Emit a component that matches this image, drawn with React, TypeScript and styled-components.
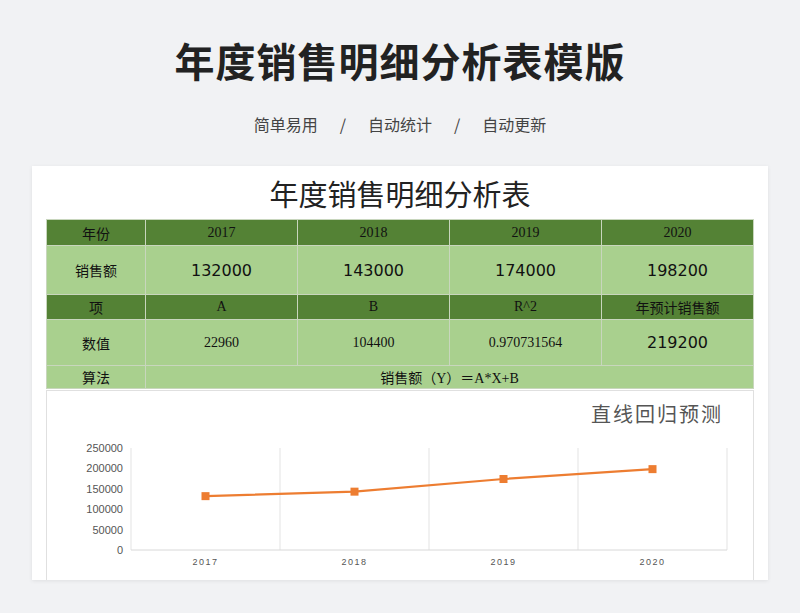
import React from "react";
import styled, { createGlobalStyle } from "styled-components";

const G = createGlobalStyle`
  body { margin:0; background:#f1f2f4; font-family:"Noto Sans CJK SC","Noto Sans",sans-serif; }
`;
const Page = styled.div`width:800px;height:613px;display:flex;flex-direction:column;align-items:center;overflow:hidden;`;
const Title = styled.h1`margin:34px 0 0;height:52px;font-size:40px;font-weight:700;color:#222;letter-spacing:1px;line-height:52px;`;
const Sub = styled.div`margin-top:26px;font-size:16px;color:#444;display:flex;gap:22px;line-height:24px;`;
const Card = styled.div`margin-top:30px;width:736px;height:414px;background:#fff;box-shadow:0 1px 4px rgba(0,0,0,.08);padding:0 14px;box-sizing:border-box;overflow:hidden;`;
const SheetTitle = styled.div`height:53px;text-align:center;font-family:"Noto Sans CJK SC",serif;font-size:29px;color:#222;line-height:54px;`;
const Table = styled.div`display:grid;grid-template-columns:98px repeat(4,1fr);grid-template-rows:25px 48px 24px 45px 22px;gap:1px;background:#c8d6bd;border:1px solid #c8d6bd;`;
const Cell = styled.div<{ dark?: boolean; big?: boolean; span?: number }>`
  background:${p => p.dark ? "#548235" : "#a9d08e"};
  color:#111;display:flex;align-items:center;justify-content:center;
  font-family:${p => p.big ? '"DejaVu Sans","Noto Sans CJK SC"' : '"Liberation Serif","Noto Sans CJK SC",serif'};
  font-size:${p => p.big ? "16px" : "14px"};
  ${p => p.span ? `grid-column: span ${p.span};` : ""}
`;
const Chart = styled.div`margin-top:1px;height:210px;border:1px solid #e0e0e0;position:relative;`;
const ChartTitle = styled.div`position:absolute;right:30px;top:8px;font-size:20px;color:#555;font-family:"Noto Sans CJK SC",serif;letter-spacing:2px;`;

const years = ["2017", "2018", "2019", "2020"];
const vals = [132000, 143000, 174000, 198200];

export default function App() {
  const x0 = 84, w = 149, y0 = 159, h = 102;
  return (
    <Page>
      <G />
      <Title>年度销售明细分析表模版</Title>
      <Sub><span>简单易用</span><span>/</span><span>自动统计</span><span>/</span><span>自动更新</span></Sub>
      <Card>
        <SheetTitle>年度销售明细分析表</SheetTitle>
        <Table>
          <Cell dark>年份</Cell>{years.map(y => <Cell dark key={y}>{y}</Cell>)}
          <Cell>销售额</Cell>{vals.map(v => <Cell big key={v}>{v}</Cell>)}
          <Cell dark>项</Cell><Cell dark>A</Cell><Cell dark>B</Cell><Cell dark>R^2</Cell><Cell dark>年预计销售额</Cell>
          <Cell>数值</Cell><Cell>22960</Cell><Cell>104400</Cell><Cell>0.970731564</Cell><Cell big>219200</Cell>
          <Cell>算法</Cell><Cell span={4}>销售额（Y）＝A*X+B</Cell>
        </Table>
        <Chart>
          <ChartTitle>直线回归预测</ChartTitle>
          <svg width="706" height="200" style={{ position: "absolute", left: 0, top: 0 }}>
            {[0, 1, 2, 3, 4, 5].map(i => (
              <text key={i} x={x0 - 8} y={y0 - i * h / 5 + 4} textAnchor="end" fontSize="11" fill="#555" fontFamily="Liberation Sans">{i * 50000}</text>
            ))}
            {[0, 1, 2, 3, 4].map(i => <line key={i} x1={x0 + i * w} x2={x0 + i * w} y1={y0 - h} y2={y0} stroke="#e3e3e3" />)}
            <line x1={x0} x2={x0 + 4 * w} y1={y0} y2={y0} stroke="#d8d8d8" />
            {years.map((y, i) => <text key={y} x={x0 + w / 2 + i * w} y={y0 + 15} textAnchor="middle" fontSize="9" letterSpacing="1.5" fill="#555" fontFamily="Liberation Sans">{y}</text>)}
            <polyline fill="none" stroke="#ed7d31" strokeWidth="2.2" points={vals.map((v, i) => `${x0 + w / 2 + i * w},${y0 - v / 250000 * h}`).join(" ")} />
            {vals.map((v, i) => <rect key={i} x={x0 + w / 2 + i * w - 4} y={y0 - v / 250000 * h - 4} width="8" height="8" fill="#ed7d31" />)}
          </svg>
        </Chart>
      </Card>
    </Page>
  );
}
